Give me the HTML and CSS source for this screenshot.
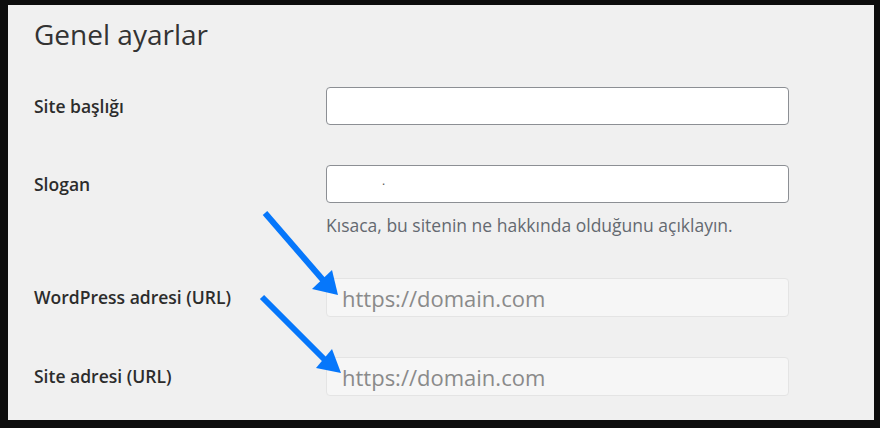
FILE: index.html
```html
<html lang="tr">
    <head>
        <title>Genel ayarlar</title>
        <link rel="stylesheet" href="styles.css">
    </head>
    <body>
        <div class="panel">
            <h1 class="title">Genel ayarlar</h1>
            <div class="row">
                <label class="label">Site başlığı</label>
                <div class="field">
                    <input class="input" type="text" value="">
                </div>
            </div>
            <div class="row">
                <label class="label">Slogan</label>
                <div class="field">
                    <div class="input fake"><span class="dot">.</span></div>
                    <p class="desc">Kısaca, bu sitenin ne hakkında olduğunu açıklayın.</p>
                </div>
            </div>
            <div class="row">
                <label class="label">WordPress adresi (URL)</label>
                <div class="field">
                    <input class="input readonly" type="text" value="https://domain.com" readonly>
                </div>
            </div>
            <div class="row">
                <label class="label">Site adresi (URL)</label>
                <div class="field">
                    <input class="input readonly" type="text" value="https://domain.com" readonly>
                </div>
            </div>
        </div>

        <svg class="arrows" width="880" height="428" viewBox="0 0 880 428">
            <line x1="265" y1="213" x2="323" y2="280" />
            <polygon points="338,295 312,289 332,270" />
            <line x1="262" y1="297" x2="325" y2="360" />
            <polygon points="341,373 316,368 332,349" />
        </svg>
    </body>
</html>
```

FILE: styles.css
```css
body {
    margin: 0;
    padding: 5px 6px 8px 8px;
    background-color: #0d0d0d;
    font-family: "Open Sans", "Noto Sans", sans-serif;
    position: relative;
    width: 866px;
    height: 415px;
}

.panel {
    background-color: #f0f0f0;
    width: 866px;
    height: 415px;
    padding: 10px 0 0 26px;
    box-sizing: border-box;
}

.title {
    margin: 0 0 34px 0;
    font-size: 28px;
    line-height: 38px;
    font-weight: 400;
    color: #333;
}

.row {
    display: flex;
    align-items: flex-start;
    margin-bottom: 40px;
}

.label {
    width: 292px;
    line-height: 38px;
    font-size: 17.5px;
    font-weight: 600;
    color: #2c2c2c;
}

.field {
    width: 463px;
}

.input {
    display: block;
    width: 463px;
    height: 38px;
    box-sizing: border-box;
    margin: 0;
    background-color: #fff;
    border: 1px solid #8c8f94;
    border-radius: 4px;
    font-family: inherit;
    outline: none;
}

.fake {
    position: relative;
}

.dot {
    position: absolute;
    left: 55px;
    top: 6px;
    font-size: 12px;
    color: #555;
}

.readonly {
    height: 39px;
    background-color: #f6f6f6;
    border-color: #e4e4e4;
    padding: 0 0 0 15px;
    font-size: 22px;
    color: #8a8a8a;
}

.desc {
    margin: 9px 0 0 0;
    font-size: 17.5px;
    line-height: 26px;
    color: #646970;
}

.arrows {
    position: absolute;
    left: 0;
    top: 0;
    pointer-events: none;
}

.arrows line {
    stroke: #0677fb;
    stroke-width: 6;
}

.arrows polygon {
    fill: #0677fb;
}
```
